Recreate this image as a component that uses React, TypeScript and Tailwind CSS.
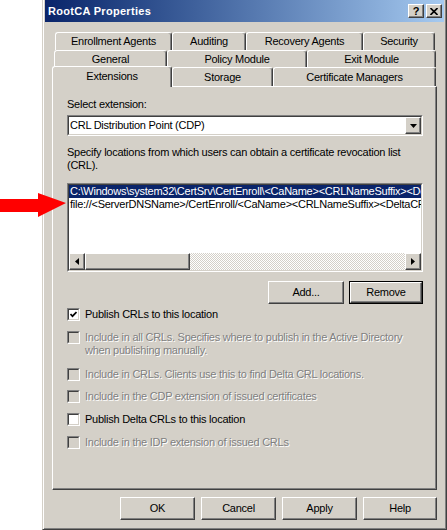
import React from 'react';

// classic 3D edges
const raised =
  'border border-t-white border-l-white border-r-[#404040] border-b-[#404040] shadow-[inset_-1px_-1px_#808080]';
const sunken = 'border border-t-[#808080] border-l-[#808080] border-r-white border-b-white';
const sunkenInner = 'border border-t-[#404040] border-l-[#404040] border-r-[#d4d0c8] border-b-[#d4d0c8]';
const disabledText = 'text-[#808080] [text-shadow:1px_1px_0_#ffffff]';

function Tab({ label, className = '', selected = false }: { label: string; className?: string; selected?: boolean }) {
  return (
    <div
      className={`${className} flex items-center justify-center shrink-0 border-t border-l border-r border-t-white border-l-white border-r-[#404040] rounded-t-[3px] shadow-[inset_-1px_0_#808080] bg-[#d4d0c8] ${
        selected ? 'relative z-10 -mb-px pb-[1px]' : ''
      }`}
    >
      {label}
    </div>
  );
}

function Button({ label, className = '', isDefault = false }: { label: string; className?: string; isDefault?: boolean }) {
  const inner = (
    <div className={`${raised} flex-1 flex items-center justify-center bg-[#d4d0c8]`}>{label}</div>
  );
  return (
    <div className={`${className} h-[23px] flex shrink-0 ${isDefault ? 'border border-black' : ''}`}>{inner}</div>
  );
}

function Check({ checked = false, disabled = false }: { checked?: boolean; disabled?: boolean }) {
  return (
    <span className={`${sunken} w-[13px] h-[13px] shrink-0 flex`}>
      <span className={`${sunkenInner} flex-1 flex items-center justify-center ${disabled ? 'bg-[#d4d0c8]' : 'bg-white'}`}>
        {checked && (
          <svg width="7" height="7" viewBox="0 0 7 7">
            <path d="M0.5 3 L2.5 5.2 L6.5 1" fill="none" stroke="#000" strokeWidth="1.7" />
          </svg>
        )}
      </span>
    </span>
  );
}

function Option({ children, checked, disabled }: { children: React.ReactNode; checked?: boolean; disabled?: boolean }) {
  return (
    <div className="flex items-start gap-[5px]">
      <Check checked={checked} disabled={disabled} />
      <span className={disabled ? disabledText : 'text-black'}>{children}</span>
    </div>
  );
}

function Arrow({ dir }: { dir: 'left' | 'right' | 'down' }) {
  if (dir === 'down')
    return (
      <svg width="7" height="4" viewBox="0 0 7 4">
        <path d="M0 0 H7 L3.5 4 Z" fill="#000" />
      </svg>
    );
  return (
    <svg width="4" height="7" viewBox="0 0 4 7">
      <path d={dir === 'left' ? 'M4 0 V7 L0 3.5 Z' : 'M0 0 V7 L4 3.5 Z'} fill="#000" />
    </svg>
  );
}

export default function App() {
  return (
    <div className="relative w-[447px] h-[530px] bg-white flex font-['Liberation_Sans',Arial,sans-serif] text-[11px] leading-[13px] tracking-[-0.25px] text-black">
      {/* Dialog window */}
      <div className="ml-[42px] w-[405px] h-[530px] bg-[#d4d0c8] border-l border-l-[#d4d0c8] border-r border-r-[#404040] border-b border-b-[#404040] shadow-[inset_1px_0_#ffffff,inset_-1px_-1px_#808080] pl-[2px] pr-[2px] flex flex-col">
        {/* Title bar */}
        <div className="h-[22px] flex items-center bg-linear-to-r from-[#0a246a] to-[#a6caf0] pl-[3px] pr-[2px]">
          <span className="text-white font-bold text-[11px] tracking-[0.3px] flex-1">RootCA Properties</span>
          <div className={`${raised} w-[16px] h-[14px] bg-[#d4d0c8] flex items-center justify-center font-bold text-[11px] leading-none`}>
            ?
          </div>
          <div className={`${raised} ml-[2px] w-[16px] h-[14px] bg-[#d4d0c8] flex items-center justify-center`}>
            <svg width="8" height="7" viewBox="0 0 8 7">
              <path d="M0.5 0 L7.5 7 M7.5 0 L0.5 7" stroke="#000" strokeWidth="1.6" />
            </svg>
          </div>
        </div>

        <div className="pl-[7px] mt-[10px] w-[392px]">
          {/* Tabs */}
          <div className="flex h-[18px] pl-[3px]">
            <Tab label="Enrollment Agents" className="w-[117px]" />
            <Tab label="Auditing" className="w-[74px]" />
            <Tab label="Recovery Agents" className="w-[117px]" />
            <Tab label="Security" className="w-[72px]" />
          </div>
          <div className="flex h-[17px] pl-[2px]">
            <Tab label="General" className="w-[113px]" />
            <Tab label="Policy Module" className="w-[140px]" />
            <Tab label="Exit Module" className="w-[129px]" />
          </div>
          <div className="flex items-end h-[19px]">
            <Tab label="Extensions" className="w-[120px] h-[21px]" selected />
            <Tab label="Storage" className="w-[101px] h-[19px]" />
            <Tab label="Certificate Managers" className="w-[163px] h-[19px]" />
          </div>

          {/* Panel */}
          <div className="w-[385px] h-[404px] border border-t-white border-l-white border-r-[#404040] border-b-[#404040] shadow-[inset_-1px_-1px_#808080] pt-[11px] pl-[14px] flex flex-col">
            <div className="w-[356px] flex flex-col">
              <div>Select extension:</div>

              <div className={`${sunken} mt-[4px] h-[21px] flex`}>
                <div className={`${sunkenInner} flex-1 flex items-center bg-white`}>
                  <span className="flex-1 pl-[1px]">CRL Distribution Point (CDP)</span>
                  <div className={`${raised} w-[16px] h-full bg-[#d4d0c8] flex items-center justify-center`}>
                    <Arrow dir="down" />
                  </div>
                </div>
              </div>

              <p className="mt-[10px]">
                Specify locations from which users can obtain a certificate revocation list
                <br />
                (CRL).
              </p>

              {/* Location list */}
              <div className={`${sunken} mt-[11px] h-[89px] flex`}>
                <div className={`${sunkenInner} flex-1 min-w-0 flex flex-col bg-white`}>
                  <div className="flex-1 overflow-hidden">
                    <div className="h-[13px] bg-[#0a246a] text-white whitespace-nowrap pl-[1px]">
                      C:\Windows\system32\CertSrv\CertEnroll\&lt;CaName&gt;&lt;CRLNameSuffix&gt;&lt;DeltaCRLAllowed&gt;.crl
                    </div>
                    <div className="h-[13px] whitespace-nowrap pl-[1px]">
                      file://&lt;ServerDNSName&gt;/CertEnroll/&lt;CaName&gt;&lt;CRLNameSuffix&gt;&lt;DeltaCRLAllowed&gt;.crl
                    </div>
                  </div>
                  <div className="h-[17px] flex">
                    <div className={`${raised} w-[16px] bg-[#d4d0c8] flex items-center justify-center`}>
                      <Arrow dir="left" />
                    </div>
                    <div className={`${raised} w-[105px] bg-[#d4d0c8]`} />
                    <div className="flex-1 bg-[repeating-conic-gradient(#d4d0c8_0_25%,#ffffff_0_50%)] bg-[length:2px_2px]" />
                    <div className={`${raised} w-[16px] bg-[#d4d0c8] flex items-center justify-center`}>
                      <Arrow dir="right" />
                    </div>
                  </div>
                </div>
              </div>

              <div className="mt-[9px] flex justify-end gap-[5px]">
                <Button label="Add..." className="w-[76px]" />
                <Button label="Remove" className="w-[74px]" isDefault />
              </div>

              <div className="mt-[4px] flex flex-col">
                <Option checked>Publish CRLs to this location</Option>
                <div className="mt-[10px]">
                  <Option disabled>
                    Include in all CRLs. Specifies where to publish in the Active Directory
                    <br />
                    when publishing manually.
                  </Option>
                </div>
                <div className="mt-[11px]">
                  <Option disabled>Include in CRLs. Clients use this to find Delta CRL locations.</Option>
                </div>
                <div className="mt-[9px]">
                  <Option disabled>Include in the CDP extension of issued certificates</Option>
                </div>
                <div className="mt-[10px]">
                  <Option>Publish Delta CRLs to this location</Option>
                </div>
                <div className="mt-[10px]">
                  <Option disabled>Include in the IDP extension of issued CRLs</Option>
                </div>
              </div>
            </div>
          </div>

          {/* Dialog buttons */}
          <div className="mt-[7px] w-[385px] flex justify-end gap-[6px]">
            <Button label="OK" className="w-[75px]" />
            <Button label="Cancel" className="w-[75px]" />
            <Button label="Apply" className="w-[75px]" />
            <Button label="Help" className="w-[74px]" />
          </div>
        </div>
      </div>

      {/* Red callout arrow */}
      <svg className="absolute left-0 top-[191px]" width="68" height="30" viewBox="0 0 68 30">
        <path d="M0 8 H38 V2 L66 12 L38 26 V21 H0 Z" fill="#ff0000" />
      </svg>
    </div>
  );
}
